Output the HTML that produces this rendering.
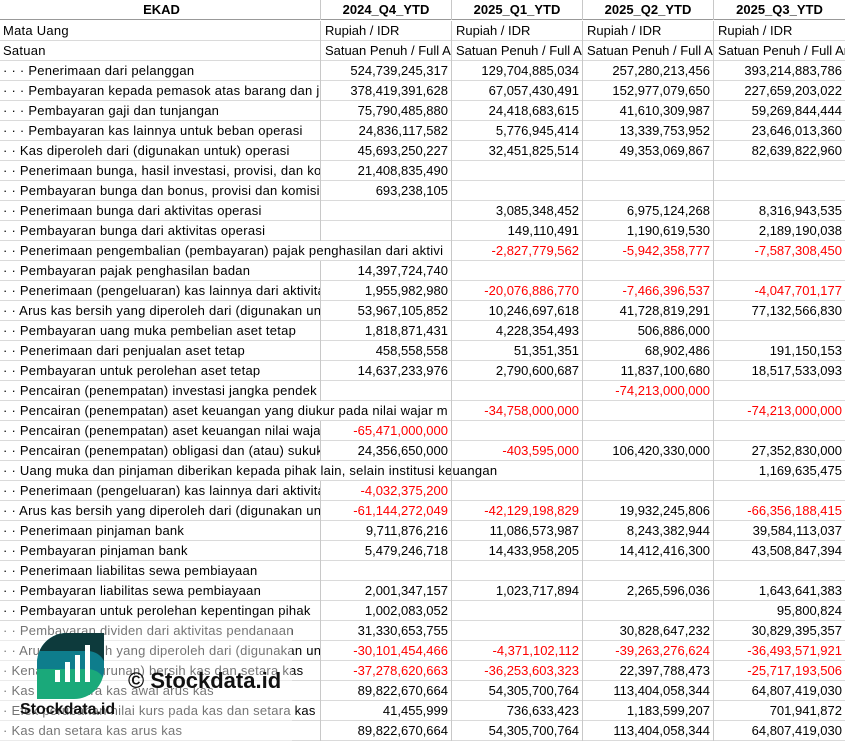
<!DOCTYPE html>
<html><head><meta charset="utf-8"><style>
*{margin:0;padding:0;box-sizing:border-box}
body{width:845px;height:741px;overflow:hidden;background:#fff;font-family:"Liberation Sans",Arial,sans-serif;font-size:13px;color:#000;position:relative}
.r{position:absolute;left:0;width:845px;height:20px;border-bottom:1px solid #dadada}
.c{position:absolute;top:0;height:20px;line-height:20px;white-space:nowrap;overflow:hidden;border-right:1px solid #c8c8c8}
.l{left:0;width:321px;padding-left:3px;letter-spacing:0.25px}
.l.o{overflow:visible;border-right:none}
.n{text-align:right;padding-right:3px}
.a{left:321px;width:131px}.b{left:452px;width:131px}.d{left:583px;width:131px}.e{left:714px;width:131px;border-right:none}
.h .c{font-weight:bold;text-align:center;letter-spacing:0}
.h{border-bottom:1px solid #999}
.neg{color:#f00}
.t{padding-left:4px;text-align:left}
</style></head><body>
<div id="rows"></div>
<div class="r h" style="top:0"><div class="c l" style="text-align:center">EKAD</div><div class="c a">2024_Q4_YTD</div><div class="c b">2025_Q1_YTD</div><div class="c d">2025_Q2_YTD</div><div class="c e">2025_Q3_YTD</div></div>
<script>
const rows=[
["Mata Uang","Rupiah / IDR","Rupiah / IDR","Rupiah / IDR","Rupiah / IDR",0,1],
["Satuan","Satuan Penuh / Full Amount","Satuan Penuh / Full Amount","Satuan Penuh / Full Amount","Satuan Penuh / Full Amount",0,1],
["· · · Penerimaan dari pelanggan","524,739,245,317","129,704,885,034","257,280,213,456","393,214,883,786"],
["· · · Pembayaran kepada pemasok atas barang dan jasa","378,419,391,628","67,057,430,491","152,977,079,650","227,659,203,022"],
["· · · Pembayaran gaji dan tunjangan","75,790,485,880","24,418,683,615","41,610,309,987","59,269,844,444"],
["· · · Pembayaran kas lainnya untuk beban operasi","24,836,117,582","5,776,945,414","13,339,753,952","23,646,013,360"],
["· · Kas diperoleh dari (digunakan untuk) operasi","45,693,250,227","32,451,825,514","49,353,069,867","82,639,822,960"],
["· · Penerimaan bunga, hasil investasi, provisi, dan komisi","21,408,835,490","","",""],
["· · Pembayaran bunga dan bonus, provisi dan komisi","693,238,105","","",""],
["· · Penerimaan bunga dari aktivitas operasi","","3,085,348,452","6,975,124,268","8,316,943,535"],
["· · Pembayaran bunga dari aktivitas operasi","","149,110,491","1,190,619,530","2,189,190,038"],
["· · Penerimaan pengembalian (pembayaran) pajak penghasilan dari aktivi","","-2,827,779,562","-5,942,358,777","-7,587,308,450",1],
["· · Pembayaran pajak penghasilan badan","14,397,724,740","","",""],
["· · Penerimaan (pengeluaran) kas lainnya dari aktivitas","1,955,982,980","-20,076,886,770","-7,466,396,537","-4,047,701,177"],
["· · Arus kas bersih yang diperoleh dari (digunakan untuk)","53,967,105,852","10,246,697,618","41,728,819,291","77,132,566,830"],
["· · Pembayaran uang muka pembelian aset tetap","1,818,871,431","4,228,354,493","506,886,000",""],
["· · Penerimaan dari penjualan aset tetap","458,558,558","51,351,351","68,902,486","191,150,153"],
["· · Pembayaran untuk perolehan aset tetap","14,637,233,976","2,790,600,687","11,837,100,680","18,517,533,093"],
["· · Pencairan (penempatan) investasi jangka pendek","","","-74,213,000,000",""],
["· · Pencairan (penempatan) aset keuangan yang diukur pada nilai wajar m","","-34,758,000,000","","-74,213,000,000",1],
["· · Pencairan (penempatan) aset keuangan nilai wajar","-65,471,000,000","","",""],
["· · Pencairan (penempatan) obligasi dan (atau) sukuk","24,356,650,000","-403,595,000","106,420,330,000","27,352,830,000"],
["· · Uang muka dan pinjaman diberikan kepada pihak lain, selain institusi keuangan","","","","1,169,635,475",1],
["· · Penerimaan (pengeluaran) kas lainnya dari aktivitas","-4,032,375,200","","",""],
["· · Arus kas bersih yang diperoleh dari (digunakan untuk)","-61,144,272,049","-42,129,198,829","19,932,245,806","-66,356,188,415"],
["· · Penerimaan pinjaman bank","9,711,876,216","11,086,573,987","8,243,382,944","39,584,113,037"],
["· · Pembayaran pinjaman bank","5,479,246,718","14,433,958,205","14,412,416,300","43,508,847,394"],
["· · Penerimaan liabilitas sewa pembiayaan","","","",""],
["· · Pembayaran liabilitas sewa pembiayaan","2,001,347,157","1,023,717,894","2,265,596,036","1,643,641,383"],
["· · Pembayaran untuk perolehan kepentingan pihak","1,002,083,052","","","95,800,824"],
["· · Pembayaran dividen dari aktivitas pendanaan","31,330,653,755","","30,828,647,232","30,829,395,357"],
["· · Arus kas bersih yang diperoleh dari (digunakan untuk)","-30,101,454,466","-4,371,102,112","-39,263,276,624","-36,493,571,921"],
["· Kenaikan (penurunan) bersih kas dan setara kas","-37,278,620,663","-36,253,603,323","22,397,788,473","-25,717,193,506"],
["· Kas dan setara kas awal arus kas","89,822,670,664","54,305,700,764","113,404,058,344","64,807,419,030"],
["· Efek perubahan nilai kurs pada kas dan setara kas","41,455,999","736,633,423","1,183,599,207","701,941,872"],
["· Kas dan setara kas arus kas","89,822,670,664","54,305,700,764","113,404,058,344","64,807,419,030"]
];
let h="";
rows.forEach((r,i)=>{
 const top=21+i*20;
 const cls=["a","b","d","e"];
 h+=`<div class="r" style="top:${top}px"><div class="c l${r[5]?' o':''}">${r[0]}</div>`;
 for(let k=0;k<4;k++){const v=r[k+1];h+=`<div class="c ${cls[k]} ${r[6]?'t':'n'}${v.startsWith('-')?' neg':''}"${r[5]&&k==0&&!v?' style="background:transparent"':''}>${v}</div>`;}
 h+="</div>";
});
document.getElementById("rows").outerHTML=h;
</script>
<div style="position:absolute;left:0;top:622px;width:292px;height:119px;background:rgba(255,255,255,0.45)"></div>
<svg style="position:absolute;left:37px;top:633px" width="67" height="66" viewBox="0 0 67 66">
<defs><clipPath id="cp"><path d="M30 0H67V36A30 30 0 0 1 37 66H0V30A30 30 0 0 1 30 0Z"/></clipPath></defs>
<g clip-path="url(#cp)">
<rect width="67" height="66" fill="#1aa97a"/>
<path d="M0 0H67V46C64 40 58 36 50 36H0Z" fill="#0e7d8c"/>
<path d="M0 0H67V28C64 22 58 18 50 18H0Z" fill="#0d3a3c"/>
</g>
<rect x="18" y="37" width="5" height="12" fill="#fff"/>
<rect x="28" y="29" width="5" height="20" fill="#fff"/>
<rect x="38" y="22" width="5" height="27" fill="#fff"/>
<rect x="48" y="12" width="5" height="37" fill="#fff"/>
</svg>
<div style="position:absolute;left:128px;top:666px;font-weight:bold;font-size:22px;line-height:30px;color:#111">© Stockdata.id</div>
<div style="position:absolute;left:20px;top:699px;font-weight:bold;font-size:16px;line-height:22px;color:#111">Stockdata.id</div>
</body></html>
